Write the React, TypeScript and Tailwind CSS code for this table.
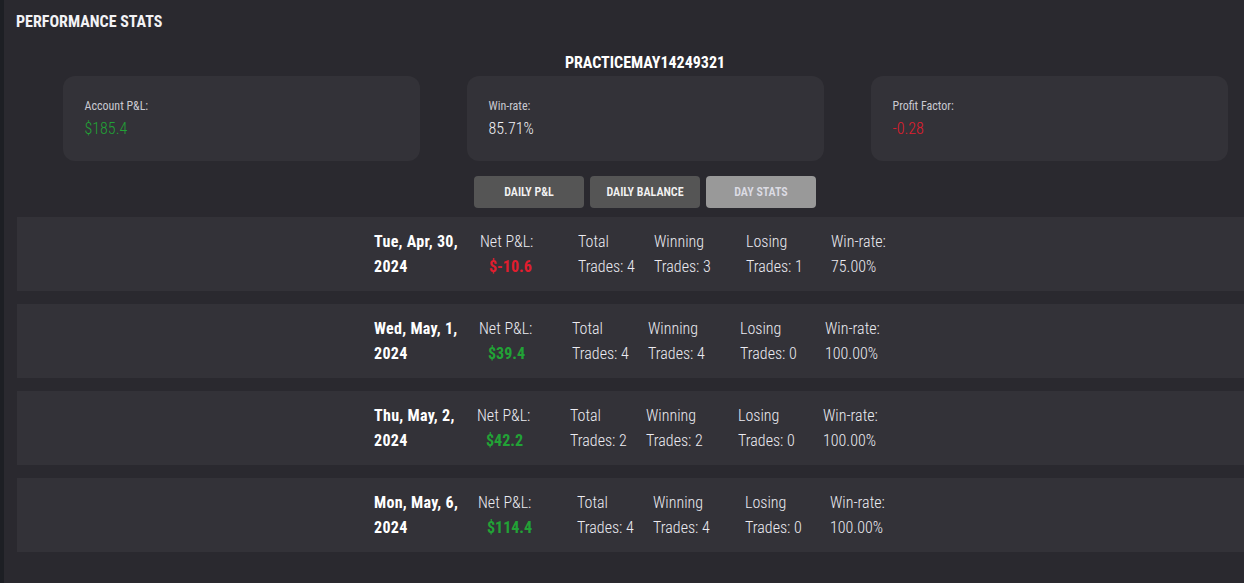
import React from "react";

const font = {
  fontFamily:
    "'Roboto Condensed', 'Liberation Sans Narrow', 'DejaVu Sans Condensed', Roboto, sans-serif",
};

type Row = {
  date1: string;
  net: string;
  pos: boolean;
  total: number;
  win: number;
  lose: number;
  rate: string;
  dateW: string;
  netW: string;
};

const rows: Row[] = [
  { date1: "Tue, Apr, 30,", net: "$-10.6", pos: false, total: 4, win: 3, lose: 1, rate: "75.00%", dateW: "w-[106px]", netW: "w-[98px]" },
  { date1: "Wed, May, 1,", net: "$39.4", pos: true, total: 4, win: 4, lose: 0, rate: "100.00%", dateW: "w-[105px]", netW: "w-[93px]" },
  { date1: "Thu, May, 2,", net: "$42.2", pos: true, total: 2, win: 2, lose: 0, rate: "100.00%", dateW: "w-[103px]", netW: "w-[93px]" },
  { date1: "Mon, May, 6,", net: "$114.4", pos: true, total: 4, win: 4, lose: 0, rate: "100.00%", dateW: "w-[104px]", netW: "w-[99px]" },
];

function Card({ label, value, color }: { label: string; value: string; color: string }) {
  return (
    <div className="w-[357px] h-[85px] rounded-[12px] bg-[#333238] pl-[22px] pt-[22px]">
      <div className="text-[12px] leading-[16px] text-[#c9c9d1]">{label}</div>
      <div className={`text-[16px] leading-[24px] font-light mt-[3px] ${color}`}>{value}</div>
    </div>
  );
}

export default function App() {
  return (
    <div className="min-h-screen w-full bg-[#2a292f] flex overflow-hidden text-white" style={font}>
      <div className="w-[4px] shrink-0 bg-[#1d1f24]" />
      <div className="flex-1 min-w-0">
        <h1 className="pl-[12px] pt-[10px] text-[16px] leading-[24px] font-bold text-[#f2f2f5]">
          PERFORMANCE STATS
        </h1>
        <div className="ml-[13px] w-[1256px]">
          <div className="mt-[17px] text-center text-[16px] leading-[24px] font-bold text-white">
            PRACTICEMAY14249321
          </div>
          <div className="mt-[1px] flex justify-center gap-[47px]">
            <Card label="Account P&L:" value="$185.4" color="text-[#22a236]" />
            <Card label="Win-rate:" value="85.71%" color="text-[#f0f0f4]" />
            <Card label="Profit Factor:" value="-0.28" color="text-[#e11d2e]" />
          </div>
          <div className="mt-[15px] flex justify-center gap-[6px]">
            <button className="w-[110px] h-[32px] rounded-[4px] bg-[#555555] text-[12px] font-semibold text-[#f2f2f2]">
              DAILY P&amp;L
            </button>
            <button className="w-[110px] h-[32px] rounded-[4px] bg-[#555555] text-[12px] font-semibold text-[#f2f2f2]">
              DAILY BALANCE
            </button>
            <button className="w-[110px] h-[32px] rounded-[4px] bg-[#999999] text-[12px] font-semibold text-[#dcdce4]">
              DAY STATS
            </button>
          </div>
          <div className="mt-[9px] flex flex-col gap-[13px]">
            {rows.map((r) => (
              <div key={r.date1} className="h-[74px] bg-[#333238] flex items-center pl-[357px] text-[16px] leading-[25px]">
                <div className={`${r.dateW} shrink-0 font-bold tracking-[0.3px] text-white`}>
                  <div>{r.date1}</div>
                  <div>2024</div>
                </div>
                <div className={`${r.netW} shrink-0`}>
                  <div className="font-light text-[#ececf2]">Net P&amp;L:</div>
                  <div className={`pl-[9px] font-bold ${r.pos ? "text-[#22a236]" : "text-[#e11d2e]"}`}>{r.net}</div>
                </div>
                <div className="w-[76px] shrink-0 font-light text-[#ececf2]">
                  <div>Total</div>
                  <div>Trades: {r.total}</div>
                </div>
                <div className="w-[92px] shrink-0 font-light text-[#ececf2]">
                  <div>Winning</div>
                  <div>Trades: {r.win}</div>
                </div>
                <div className="w-[85px] shrink-0 font-light text-[#ececf2]">
                  <div>Losing</div>
                  <div>Trades: {r.lose}</div>
                </div>
                <div className="shrink-0 font-light text-[#ececf2]">
                  <div>Win-rate:</div>
                  <div>{r.rate}</div>
                </div>
              </div>
            ))}
          </div>
        </div>
      </div>
    </div>
  );
}
